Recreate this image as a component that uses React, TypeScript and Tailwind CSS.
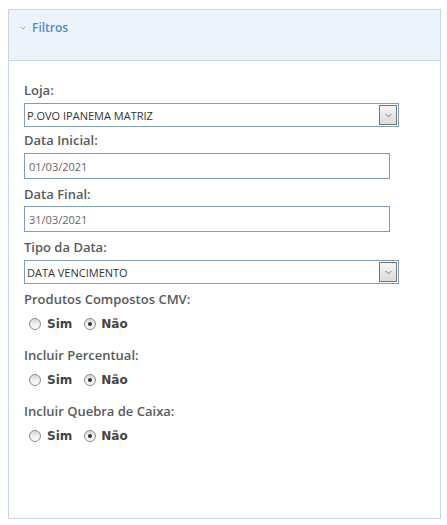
import { ChevronDown } from "lucide-react"

const labelCls = "block h-[20px] leading-[20px] text-[13px] font-semibold text-[#5a5a5a]"

function SelectBox({ value, mt }: { value: string; mt: string }) {
  return (
    <div className={`${mt} flex items-center w-[375px] h-[24px] border border-[#7f9db9] bg-white`}>
      <span className="flex-1 pl-[2px] text-[11px] leading-none text-[#333333]">{value}</span>
      <span className="mr-[1px] flex items-center justify-center w-[18px] h-[20px] border border-[#777777] bg-gradient-to-b from-[#f6f6f6] to-[#dcdcdc]">
        <ChevronDown className="w-[11px] h-[11px] text-[#666666]" strokeWidth={2} />
      </span>
    </div>
  )
}

function TextBox({ value, mt }: { value: string; mt: string }) {
  return (
    <div className={`${mt} flex items-center w-[366px] h-[26px] border border-[#7f9db9] bg-white pl-[4px] text-[11px] leading-none text-[#666666]`}>
      {value}
    </div>
  )
}

function Radio({ checked }: { checked?: boolean }) {
  return (
    <span className="flex items-center justify-center w-[12px] h-[12px] rounded-full border border-[#8a8a8a] bg-gradient-to-b from-[#dcdcdc] to-[#ffffff]">
      {checked && <span className="w-[4px] h-[4px] rounded-full bg-[#333333]" />}
    </span>
  )
}

function RadioRow() {
  return (
    <div
      className="mt-[5px] mb-[11px] h-[20px] flex items-center pl-[5px] text-[12px] font-bold text-[#444444]"
      style={{ fontFamily: '"DejaVu Sans", Verdana, sans-serif' }}
    >
      <Radio />
      <span className="ml-[6px]">Sim</span>
      <span className="ml-[12px]"><Radio checked /></span>
      <span className="ml-[5px]">Não</span>
    </div>
  )
}

export default function App() {
  return (
    <div className="w-[447px] h-[525px] bg-white pt-[9px] pl-[8px]" style={{ fontFamily: '"Open Sans", sans-serif' }}>
      <div className="w-[433px] h-[510px] border border-[#c9d6e3] bg-white">
        <div className="h-[51px] bg-[#edf3fa] border-b border-[#c9d6e3] pt-[9px] pl-[10px] flex items-start">
          <div className="flex items-center h-[18px] text-[12px] font-semibold text-[#4f8ec6]">
            <ChevronDown className="w-[8px] h-[8px] mr-[5px]" strokeWidth={2} />
            Filtros
          </div>
        </div>
        <div className="pl-[15px] pt-[19px] flex flex-col">
          <label className={labelCls}>Loja:</label>
          <SelectBox value="P.OVO IPANEMA MATRIZ" mt="mt-[3px]" />
          <label className={`${labelCls} mt-[3px]`}>Data Inicial:</label>
          <TextBox value="01/03/2021" mt="mt-[3px]" />
          <label className={`${labelCls} mt-[5px]`}>Data Final:</label>
          <TextBox value="31/03/2021" mt="mt-[2px]" />
          <label className={`${labelCls} mt-[5px]`}>Tipo da Data:</label>
          <SelectBox value="DATA VENCIMENTO" mt="mt-[3px]" />
          <label className={`${labelCls} mt-[5px]`}>Produtos Compostos CMV:</label>
          <RadioRow />
          <label className={labelCls}>Incluir Percentual:</label>
          <RadioRow />
          <label className={labelCls}>Incluir Quebra de Caixa:</label>
          <RadioRow />
        </div>
      </div>
    </div>
  )
}
